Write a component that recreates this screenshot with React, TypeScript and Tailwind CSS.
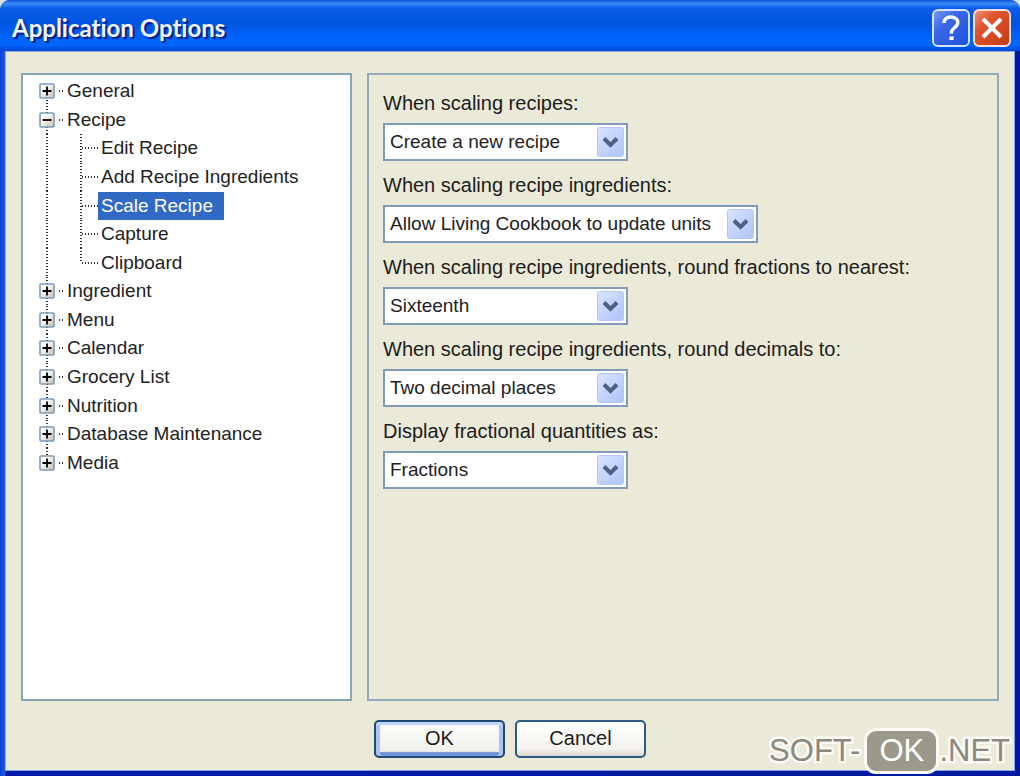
import { useState } from 'react';
import clsx from 'clsx';

type TreeItem = {
  label: string;
  child?: boolean;
  open?: boolean;
};

const treeItems: TreeItem[] = [
  { label: 'General' },
  { label: 'Recipe', open: true },
  { label: 'Edit Recipe', child: true },
  { label: 'Add Recipe Ingredients', child: true },
  { label: 'Scale Recipe', child: true },
  { label: 'Capture', child: true },
  { label: 'Clipboard', child: true },
  { label: 'Ingredient' },
  { label: 'Menu' },
  { label: 'Calendar' },
  { label: 'Grocery List' },
  { label: 'Nutrition' },
  { label: 'Database Maintenance' },
  { label: 'Media' },
];

const fields = [
  { id: 'scale-recipes', label: 'When scaling recipes:', value: 'Create a new recipe' },
  {
    id: 'scale-ingredients',
    label: 'When scaling recipe ingredients:',
    value: 'Allow Living Cookbook to update units',
    wide: true,
  },
  {
    id: 'round-fractions',
    label: 'When scaling recipe ingredients, round fractions to nearest:',
    value: 'Sixteenth',
  },
  {
    id: 'round-decimals',
    label: 'When scaling recipe ingredients, round decimals to:',
    value: 'Two decimal places',
  },
  { id: 'display-as', label: 'Display fractional quantities as:', value: 'Fractions' },
];

function ExpandIcon({ open }: { open?: boolean }) {
  return (
    <svg viewBox="0 0 16 16" className="relative w-4 h-4 shrink-0">
      <defs>
        <linearGradient id="expander" x1="0" y1="0" x2="1" y2="1">
          <stop offset="0.3" stopColor="#ffffff" />
          <stop offset="1" stopColor="#c3bcae" />
        </linearGradient>
      </defs>
      <rect x="1" y="1" width="14" height="14" rx="1" fill="url(#expander)" stroke="#809cb8" strokeWidth="1.6" />
      <path d={open ? 'M3.5 8h9' : 'M3.5 8h9M8 3.5v9'} stroke="#000" strokeWidth="1.8" />
    </svg>
  );
}

function TreeRow({
  item,
  index,
  selected,
  onSelect,
}: {
  item: TreeItem;
  index: number;
  selected: boolean;
  onSelect: () => void;
}) {
  const last = index === treeItems.length - 1;
  const lastChild = item.child && !treeItems[index + 1]?.child;

  return (
    <li className="relative flex items-center pl-4">
      {/* dotted line that joins the top level nodes */}
      <span
        className={clsx(
          'absolute left-[23px] w-[2px] bg-[repeating-linear-gradient(180deg,#333_0px,#333_1px,transparent_1px,transparent_3px)]',
          index === 0 ? 'top-1/2' : 'top-0',
          last ? 'bottom-1/2' : 'bottom-0'
        )}
      />
      {item.child ? (
        <>
          <span
            className={clsx(
              'absolute left-[57px] top-0 w-[2px] bg-[repeating-linear-gradient(180deg,#333_0px,#333_1px,transparent_1px,transparent_3px)]',
              lastChild ? 'bottom-1/2' : 'bottom-0'
            )}
          />
          <span className="ml-[43px] w-4 h-[2px] shrink-0 bg-[repeating-linear-gradient(90deg,#333_0px,#333_1px,transparent_1px,transparent_3px)]" />
        </>
      ) : (
        <>
          <ExpandIcon open={item.open} />
          <span className="ml-1 w-[5px] h-[2px] shrink-0 bg-[repeating-linear-gradient(90deg,#333_0px,#333_1px,transparent_1px,transparent_3px)]" />
        </>
      )}
      <button
        type="button"
        onClick={onSelect}
        className={clsx(
          'pl-[3px] pr-[11px] text-[19px] leading-7 whitespace-nowrap text-left',
          selected ? 'bg-[#316ac5] text-white' : 'text-[#222]'
        )}
      >
        {item.label}
      </button>
    </li>
  );
}

function SelectField({ id, label, value, wide }: { id: string; label: string; value: string; wide?: boolean }) {
  return (
    <div className="flex flex-col items-start gap-1.5">
      <label htmlFor={id} className="leading-7">
        {label}
      </label>
      <div className={clsx('relative max-w-full', wide ? 'w-[375px]' : 'w-[245px]')}>
        <select
          id={id}
          className="appearance-none w-full h-[38px] pl-[5px] pr-8 border-2 border-[#7f9db9] bg-white text-[19px] text-[#222] outline-none"
        >
          <option>{value}</option>
        </select>
        <svg viewBox="0 0 27 30" className="absolute right-1 top-1 w-[27px] h-[30px] pointer-events-none">
          <defs>
            <linearGradient id="arrow-face" x1="0" y1="0" x2="1" y2="1">
              <stop offset="0" stopColor="#dbe5ff" />
              <stop offset="0.5" stopColor="#c3d3fd" />
              <stop offset="1" stopColor="#aec4f5" />
            </linearGradient>
          </defs>
          <rect x="0.5" y="0.5" width="26" height="29" rx="2" fill="url(#arrow-face)" stroke="#b4c8f6" />
          <path d="M7 11.5l6.5 6.5 6.5-6.5" fill="none" stroke="#4d6185" strokeWidth="4" />
        </svg>
      </div>
    </div>
  );
}

export default function App() {
  const [selected, setSelected] = useState('Scale Recipe');

  return (
    <div className="min-h-screen flex flex-col bg-[#d9dfe8] font-['Liberation_Sans',Arial,sans-serif] text-[20px] text-[#1c1c1c]">
      <div className="relative flex-1 flex flex-col rounded-t-[10px] bg-[linear-gradient(90deg,#0a3fd0_0px,#1f5fe0_5px,#0019a8_6px,#0019a0_100%)]">
        <header className="h-[51px] flex items-center justify-between pl-3 pr-[9px] pt-1 rounded-t-[10px] bg-[linear-gradient(180deg,#0a4fd8_0%,#3b8cf8_7%,#0a5ce8_16%,#0054e0_45%,#0062fa_72%,#0066ff_88%,#0046d0_100%)]">
          <h1 className="font-['Lato',sans-serif] text-[24px] font-bold text-[#f4f6ff] [font-variant-ligatures:none] [text-shadow:2px_2px_1px_#0a1f80]">
            Application Options
          </h1>
          <div className="flex gap-[3px]">
            <button type="button" aria-label="Help" className="w-[38px] h-[38px]">
              <svg viewBox="0 0 38 38" className="w-full h-full">
                <defs>
                  <linearGradient id="help-face" x1="0" y1="0" x2="1" y2="1">
                    <stop offset="0" stopColor="#7a9cf5" />
                    <stop offset="0.35" stopColor="#3a68e8" />
                    <stop offset="1" stopColor="#1d50dc" />
                  </linearGradient>
                </defs>
                <rect x="1" y="1" width="36" height="36" rx="5" fill="url(#help-face)" stroke="#d5e0fa" strokeWidth="2" />
                <path
                  d="M12 14c0-4 2.8-6 6.8-6s7 2.2 7 5.6c0 5-6.4 5.2-6.4 9.8v1.4"
                  fill="none"
                  stroke="#fff"
                  strokeWidth="3.4"
                />
                <path d="M17.4 27.4h4.2v3.6h-4.2z" fill="#fff" />
              </svg>
            </button>
            <button type="button" aria-label="Close" className="w-[38px] h-[38px]">
              <svg viewBox="0 0 38 38" className="w-full h-full">
                <defs>
                  <linearGradient id="close-face" x1="0" y1="0" x2="1" y2="1">
                    <stop offset="0" stopColor="#f0937a" />
                    <stop offset="0.35" stopColor="#e0532f" />
                    <stop offset="1" stopColor="#c63a12" />
                  </linearGradient>
                </defs>
                <rect x="1" y="1" width="36" height="36" rx="5" fill="url(#close-face)" stroke="#f5dfe0" strokeWidth="2" />
                <path d="M10 10l18 18M28 10L10 28" stroke="#fff" strokeWidth="4" />
              </svg>
            </button>
          </div>
        </header>

        <main className="flex-1 flex flex-col ml-[5px] mr-[5px] mb-[5px] border border-[#86a8ea] bg-[#ebe9d8] pl-[15px] pr-[15px] pt-[21px] pb-3">
          <div className="flex-1 flex gap-[15px]">
            <nav aria-label="Options" className="w-[331px] shrink-0 border-2 border-[#8aa5b8] bg-white pt-[2px]">
              <ul className="grid h-[400px] auto-rows-fr">
                {treeItems.map((item, i) => (
                  <TreeRow
                    key={item.label}
                    item={item}
                    index={i}
                    selected={selected === item.label}
                    onSelect={() => setSelected(item.label)}
                  />
                ))}
              </ul>
            </nav>

            <section className="flex-1 flex flex-col gap-2.5 border-2 border-[#93abb8] px-[14px] pt-[14px]">
              {fields.map((field) => (
                <SelectField key={field.id} {...field} />
              ))}
            </section>
          </div>

          <footer className="flex justify-center gap-[10px] mt-[19px]">
            <button
              type="button"
              className="w-[131px] h-[38px] pb-[2px] rounded-[5px] border-2 border-[#1f4a78] bg-[linear-gradient(180deg,#fdfdfb,#f0efe9)] shadow-[inset_0_3px_1px_#c3d6fb,inset_4px_0_1px_#a9c3f2,inset_-4px_0_1px_#a9c3f2,inset_0_-4px_1px_#6f92dc]"
            >
              OK
            </button>
            <button
              type="button"
              className="w-[131px] h-[38px] pb-[2px] rounded-[5px] border-2 border-[#2f5a80] bg-[linear-gradient(180deg,#ffffff,#f3f2ec_80%,#dcd7cb)]"
            >
              Cancel
            </button>
          </footer>
        </main>

        <div className="absolute right-[10px] bottom-[2px] flex items-center text-[31px] text-[#8b897e]">
          <span className="[-webkit-text-stroke:5px_#fbfaf4] [paint-order:stroke_fill]">SOFT-</span>
          <span className="ml-1 w-[75px] h-[46px] flex items-center justify-center rounded-[12px] border-3 border-[#fbfaf4] bg-[#9b998c] text-white">
            OK
          </span>
          <span className="[-webkit-text-stroke:5px_#fbfaf4] [paint-order:stroke_fill]">.NET</span>
        </div>
      </div>
    </div>
  );
}
